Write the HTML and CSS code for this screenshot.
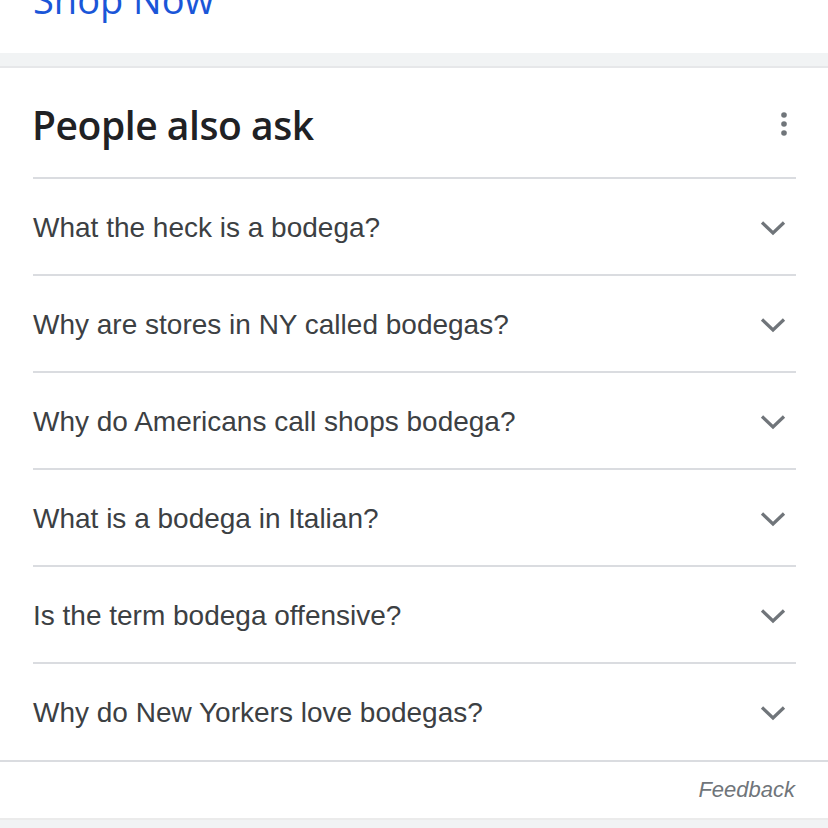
FILE: index.html
```html
<!DOCTYPE html>
<html lang="en">
  <head>
    <meta charset="UTF-8" />
    <meta name="viewport" content="width=device-width, initial-scale=1.0" />
    <title>People also ask</title>
    <link rel="stylesheet" href="styles.css">
  </head>
  <body>
    <div class="shop-card">
      <a class="shop-link" href="#">Shop Now</a>
    </div>
    <div class="gap"></div>
    <div class="paa-card">
      <div class="paa-head">
        <h2>People also ask</h2>
        <svg class="more" width="8" height="24" viewBox="0 0 8 24">
          <circle cx="4" cy="3" r="2.8" />
          <circle cx="4" cy="12" r="2.8" />
          <circle cx="4" cy="21" r="2.8" />
        </svg>
      </div>
      <div class="paa-list">
        <div class="paa-row">
          <span>What the heck is a bodega?</span>
          <svg class="chev" width="26" height="16" viewBox="0 0 26 16"><path d="M2 2.5 L13 13 L24 2.5" /></svg>
        </div>
        <div class="paa-row">
          <span>Why are stores in NY called bodegas?</span>
          <svg class="chev" width="26" height="16" viewBox="0 0 26 16"><path d="M2 2.5 L13 13 L24 2.5" /></svg>
        </div>
        <div class="paa-row">
          <span>Why do Americans call shops bodega?</span>
          <svg class="chev" width="26" height="16" viewBox="0 0 26 16"><path d="M2 2.5 L13 13 L24 2.5" /></svg>
        </div>
        <div class="paa-row">
          <span>What is a bodega in Italian?</span>
          <svg class="chev" width="26" height="16" viewBox="0 0 26 16"><path d="M2 2.5 L13 13 L24 2.5" /></svg>
        </div>
        <div class="paa-row">
          <span>Is the term bodega offensive?</span>
          <svg class="chev" width="26" height="16" viewBox="0 0 26 16"><path d="M2 2.5 L13 13 L24 2.5" /></svg>
        </div>
        <div class="paa-row">
          <span>Why do New Yorkers love bodegas?</span>
          <svg class="chev" width="26" height="16" viewBox="0 0 26 16"><path d="M2 2.5 L13 13 L24 2.5" /></svg>
        </div>
      </div>
      <div class="feedback">Feedback</div>
    </div>
    <div class="gap bottom"></div>
  </body>
</html>
```

FILE: styles.css
```css
body {
  margin: 0;
  padding: 0;
  background-color: #fff;
  font-family: "Liberation Sans", Arial, Helvetica, sans-serif;
  overflow: hidden;
}
.shop-card {
  height: 53px;
  position: relative;
  overflow: hidden;
}
.shop-link {
  position: absolute;
  left: 33px;
  top: -27px;
  font-family: "Open Sans", Roboto, sans-serif;
  font-size: 38px;
  color: #1a56d8;
  text-decoration: none;
}
.gap {
  height: 13px;
  background-color: #f1f3f4;
  border-bottom: 2px solid #e6e7e9;
}
.gap.bottom {
  height: 20px;
  border-bottom: none;
  border-top: 2px solid #ebebeb;
}
.paa-card {
  background-color: #fff;
}
.paa-head {
  display: flex;
  justify-content: space-between;
  align-items: center;
  height: 109px;
  margin: 0 32px 0 33px;
  border-bottom: 2px solid #dadce0;
}
.paa-head h2 {
  margin: 0 0 0 -1px;
  font-family: "Open Sans", Roboto, sans-serif;
  font-weight: 600;
  font-size: 39px;
  color: #202124;
  letter-spacing: -0.45px;
  padding-top: 3px;
}
.more {
  fill: #70757a;
  margin-right: 8px;
  margin-top: 2px;
}
.paa-list {
  margin: 0 32px 0 33px;
}
.paa-row {
  display: flex;
  justify-content: space-between;
  align-items: center;
  height: 97px;
  border-bottom: 2px solid #dadce0;
  font-size: 28px;
  color: #3c4043;
  padding-top: 2px;
  box-sizing: border-box;
}
.paa-row:last-child {
  border-bottom: none;
  height: 96px;
}
.chev {
  fill: none;
  stroke: #70757a;
  stroke-width: 3.2;
  margin-right: 10px;
}
.feedback {
  border-top: 2px solid #dadce0;
  height: 56px;
  padding-right: 33px;
  display: flex;
  align-items: center;
  justify-content: flex-end;
  font-style: italic;
  font-size: 22px;
  color: #70757a;
}
```
